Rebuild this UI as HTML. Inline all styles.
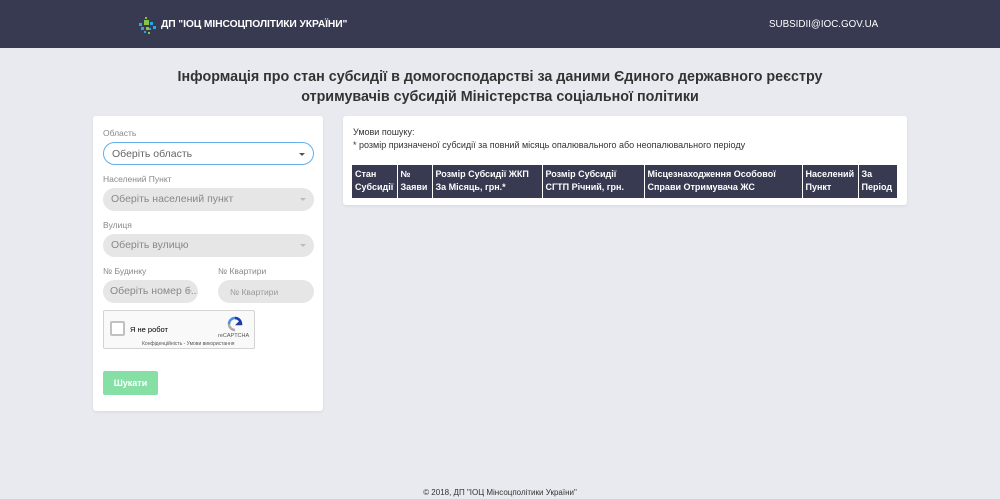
<!DOCTYPE html>
<html><head><meta charset="utf-8"><style>
*{box-sizing:border-box;margin:0;padding:0}
body{width:1000px;height:499px;background:#e9eaf0;font-family:"Liberation Sans",Arial,sans-serif;position:relative;overflow:hidden}
.hdr{position:absolute;left:0;top:0;width:1000px;height:48px;background:#373a50}
.logo{position:absolute;left:138px;top:16px}
.brand{position:absolute;left:161px;top:19px;color:#fff;font-size:10.3px;font-weight:bold;letter-spacing:-0.1px}
.mail{position:absolute;left:769px;top:19px;color:#fff;font-size:9.8px}
h1{position:absolute;left:0;top:67px;width:1000px;text-align:center;font-size:14.3px;line-height:20px;color:#333;font-weight:bold}
.card{position:absolute;background:#fff;border-radius:3px;box-shadow:0 1px 3px rgba(0,0,0,.08)}
.lbl{position:absolute;font-size:8.5px;color:#888}
.sel{position:absolute;height:23px;border-radius:12px;background:#e6e6e6;color:#888;font-size:10.5px;padding:5px 0 0 8px;white-space:nowrap;overflow:hidden}
.sel.a{background:#fff;border:1px solid #66afe9;color:#666}
.car{position:absolute;right:8px;top:10px;border:3px solid transparent;border-top:3px solid #bbb}
.a .car{border-top-color:#555}
table{position:absolute;left:352px;top:165px;width:545px;border-collapse:collapse;background:#373a50}
td{color:#fff;font-weight:bold;font-size:9px;line-height:13px;padding:3px 3px 4px;border-left:1px solid #fff;vertical-align:top}
td:first-child{border-left:none}
</style></head><body>
<div class="hdr">
<svg class="logo" width="20" height="20" viewBox="0 0 20 20"><rect x="7" y="1" width="2" height="2" fill="#8bc34a"/><rect x="6" y="4" width="5" height="5" fill="#8bc34a"/><rect x="1" y="7" width="3" height="3" fill="#29a8e0"/><rect x="12" y="6" width="3" height="3" fill="#29a8e0"/><rect x="15" y="10" width="3" height="3" fill="#29a8e0"/><rect x="3" y="11" width="3" height="3" fill="#29a8e0"/><rect x="8" y="11" width="3" height="3" fill="#8bc34a"/><rect x="11" y="12" width="2" height="2" fill="#29a8e0"/><rect x="6" y="15" width="2" height="2" fill="#29a8e0"/><rect x="10" y="16" width="2" height="2" fill="#8bc34a"/></svg>
<div class="brand">ДП "ІОЦ МІНСОЦПОЛІТИКИ УКРАЇНИ"</div>
<div class="mail">SUBSIDII@IOC.GOV.UA</div>
</div>
<h1>Інформація про стан субсидії в домогосподарстві за даними Єдиного державного реєстру<br>отримувачів субсидій Міністерства соціальної політики</h1>
<div class="card" style="left:93px;top:116px;width:230px;height:295px"></div>
<div class="lbl" style="left:103px;top:128px">Область</div>
<div class="sel a" style="left:103px;top:142px;width:211px">Оберіть область<span class="car"></span></div>
<div class="lbl" style="left:103px;top:174px">Населений Пункт</div>
<div class="sel" style="left:103px;top:188px;width:211px">Оберіть населений пункт<span class="car"></span></div>
<div class="lbl" style="left:103px;top:220px">Вулиця</div>
<div class="sel" style="left:103px;top:234px;width:211px">Оберіть вулицю<span class="car"></span></div>
<div class="lbl" style="left:103px;top:266px">№ Будинку</div>
<div class="lbl" style="left:218px;top:266px">№ Квартири</div>
<div class="sel" style="left:103px;top:280px;width:95px;padding-left:7px">Оберіть номер б...<span class="car" style="right:6px"></span></div>
<div class="sel" style="left:218px;top:280px;width:96px;font-size:8.5px;padding:7px 0 0 12px;color:#999">№ Квартири</div>
<div style="position:absolute;left:103px;top:310px;width:152px;height:39px;border:1px solid #d3d3d3;background:#f9f9f9;border-radius:2px">
<div style="position:absolute;left:6px;top:10px;width:15px;height:15px;border:2px solid #c1c1c1;background:#fff;border-radius:2px"></div>
<div style="position:absolute;left:26px;top:14px;font-size:7.5px;color:#000">Я не робот</div>
<svg style="position:absolute;left:123px;top:5px" width="16" height="16" viewBox="0 0 16 16"><path d="M8 2a6 6 0 0 1 6 6h-3l2-2" fill="none" stroke="#1c3aa9" stroke-width="2.5"/><path d="M2 8a6 6 0 0 1 6-6" fill="none" stroke="#4a90e2" stroke-width="2.5"/><path d="M8 14a6 6 0 0 1-6-6" fill="none" stroke="#aaa" stroke-width="2.5"/></svg>
<div style="position:absolute;left:114px;top:22px;font-size:5.5px;color:#555">reCAPTCHA</div>
<div style="position:absolute;left:38px;top:30px;font-size:5px;color:#555">Конфіденційність - Умови використання</div>
</div>
<div style="position:absolute;left:103px;top:371px;width:55px;height:24px;background:#86e0a6;border-radius:2px;color:#fff;font-size:9px;font-weight:bold;text-align:center;line-height:24px">Шукати</div>
<div class="card" style="left:343px;top:116px;width:564px;height:89px"></div>
<div style="position:absolute;left:353px;top:126px;font-size:9px;color:#333;line-height:13px">Умови пошуку:<br>* розмір призначеної субсидії за повний місяць опалювального або неопалювального періоду</div>
<table><tr>
<td style="width:45px">Стан Субсидії</td><td style="width:35px">№ Заяви</td><td style="width:110px">Розмір Субсидії ЖКП За Місяць, грн.*</td><td style="width:102px">Розмір Субсидії СГТП Річний, грн.</td><td style="width:158px">Місцезнаходження Особової Справи Отримувача ЖС</td><td style="width:56px">Населений Пункт</td><td>За Період</td>
</tr></table>
<div style="position:absolute;left:0;top:488px;width:1000px;text-align:center;font-size:8px;color:#333">© 2018, ДП "ІОЦ Мінсоцполітики України"</div>
</body></html>
